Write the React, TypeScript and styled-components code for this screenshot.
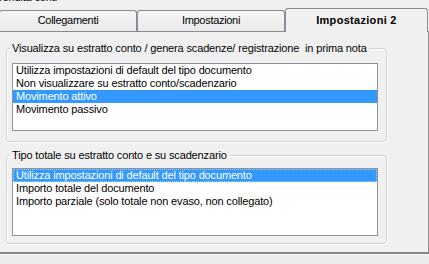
import React from "react";
import styled, { createGlobalStyle } from "styled-components";

const Global = createGlobalStyle`
  html, body { margin: 0; padding: 0; background: #f0f0f0; }
  body {
    font-family: "Liberation Sans", Arial, sans-serif;
    font-size: 11px;
    color: #000;
    overflow: hidden;
  }
`;

const Window = styled.div`
  width: 429px;
  height: 264px;
  overflow: hidden;
  background: #f0f0f0;
`;

const Caption = styled.div`
  height: 8px;
  overflow: hidden;
  line-height: 13px;
  white-space: nowrap;
`;

const CaptionText = styled.div`
  margin-top: -9px;
  margin-left: -1px;
  letter-spacing: -0.15px;
`;

const TabBar = styled.div`
  display: flex;
  align-items: flex-end;
  height: 23px;
  margin-left: -1px;
`;

const Tab = styled.div<{ $w: number; $active?: boolean }>`
  box-sizing: border-box;
  flex: none;
  width: ${(p) => p.$w}px;
  height: ${(p) => (p.$active ? 24 : 21)}px;
  margin-bottom: ${(p) => (p.$active ? -1 : 0)}px;
  border: 1px solid #898c95;
  border-bottom: none;
  border-radius: 3px 3px 0 0;
  background: ${(p) =>
    p.$active ? "#f0f0f0" : "linear-gradient(#f5f5f5, #e9e9e9)"};
  position: relative;
  z-index: ${(p) => (p.$active ? 1 : 0)};
  display: flex;
  justify-content: center;
  padding-top: ${(p) => (p.$active ? 5 : 3)}px;
  line-height: 13px;
  white-space: nowrap;
  font-weight: ${(p) => (p.$active ? "bold" : "normal")};
  letter-spacing: ${(p) => (p.$active ? "0.3px" : "-0.3px")};
`;

const Panel = styled.div`
  box-sizing: border-box;
  width: 430px;
  margin-left: -1px;
  border: 1px solid #898c95;
  border-bottom: 2px solid #858585;
  padding: 10px 0 8px 6px;
  background: #f0f0f0;
`;

const Group = styled.fieldset<{ $pt: number; $pb: number }>`
  box-sizing: border-box;
  width: 381px;
  margin: 0;
  border: 1px solid #cfd3d6;
  border-radius: 3px;
  padding: ${(p) => p.$pt}px 8px ${(p) => p.$pb}px 5px;
  box-shadow: inset 1px 1px 0 #fff, 1px 1px 0 #fff;
  & + & {
    margin-top: 7px;
  }
`;

const Legend = styled.legend`
  padding: 0 2px;
  margin-left: -2px;
  line-height: 13px;
  white-space: pre;
  letter-spacing: -0.15px;
`;

const ListBox = styled.div`
  box-sizing: border-box;
  width: 366px;
  height: 68px;
  border: 1px solid #8e9196;
  background: #fff;
  overflow: hidden;
`;

const Item = styled.div<{ $sel?: boolean; $focus?: boolean }>`
  height: 13px;
  line-height: 13px;
  padding-left: 3px;
  white-space: nowrap;
  letter-spacing: -0.15px;
  background: ${(p) => (p.$sel ? "#3399ff" : "transparent")};
  color: ${(p) => (p.$sel ? "#fff" : "#000")};
  outline: ${(p) => (p.$focus ? "1px dotted rgba(255,255,255,0.55)" : "none")};
  outline-offset: -1px;
`;

const Footer = styled.div`
  height: 10px;
  background: #ececec;
  border-top: 1px solid #f8f8f8;
`;

const list1 = [
  "Utilizza impostazioni di default del tipo documento",
  "Non visualizzare su estratto conto/scadenzario",
  "Movimento attivo",
  "Movimento passivo",
];

const list2 = [
  "Utilizza impostazioni di default del tipo documento",
  "Importo totale del documento",
  "Importo parziale (solo totale non evaso, non collegato)",
];

export default function App() {
  return (
    <Window>
      <Global />
      <Caption>
        <CaptionText>rendita conti</CaptionText>
      </Caption>
      <TabBar>
        <Tab $w={138}>Collegamenti</Tab>
        <Tab $w={148}>Impostazioni</Tab>
        <Tab $w={143} $active>
          Impostazioni 2
        </Tab>
      </TabBar>
      <Panel>
        <Group $pt={8} $pb={10}>
          <Legend>
            {"Visualizza su estratto conto / genera scadenze/ registrazione  in prima nota"}
          </Legend>
          <ListBox>
            {list1.map((t, i) => (
              <Item key={t} $sel={i === 2}>
                {t}
              </Item>
            ))}
          </ListBox>
        </Group>
        <Group $pt={6} $pb={7}>
          <Legend>Tipo totale su estratto conto e su scadenzario</Legend>
          <ListBox>
            {list2.map((t, i) => (
              <Item key={t} $sel={i === 0} $focus={i === 0}>
                {t}
              </Item>
            ))}
          </ListBox>
        </Group>
      </Panel>
      <Footer />
    </Window>
  );
}
